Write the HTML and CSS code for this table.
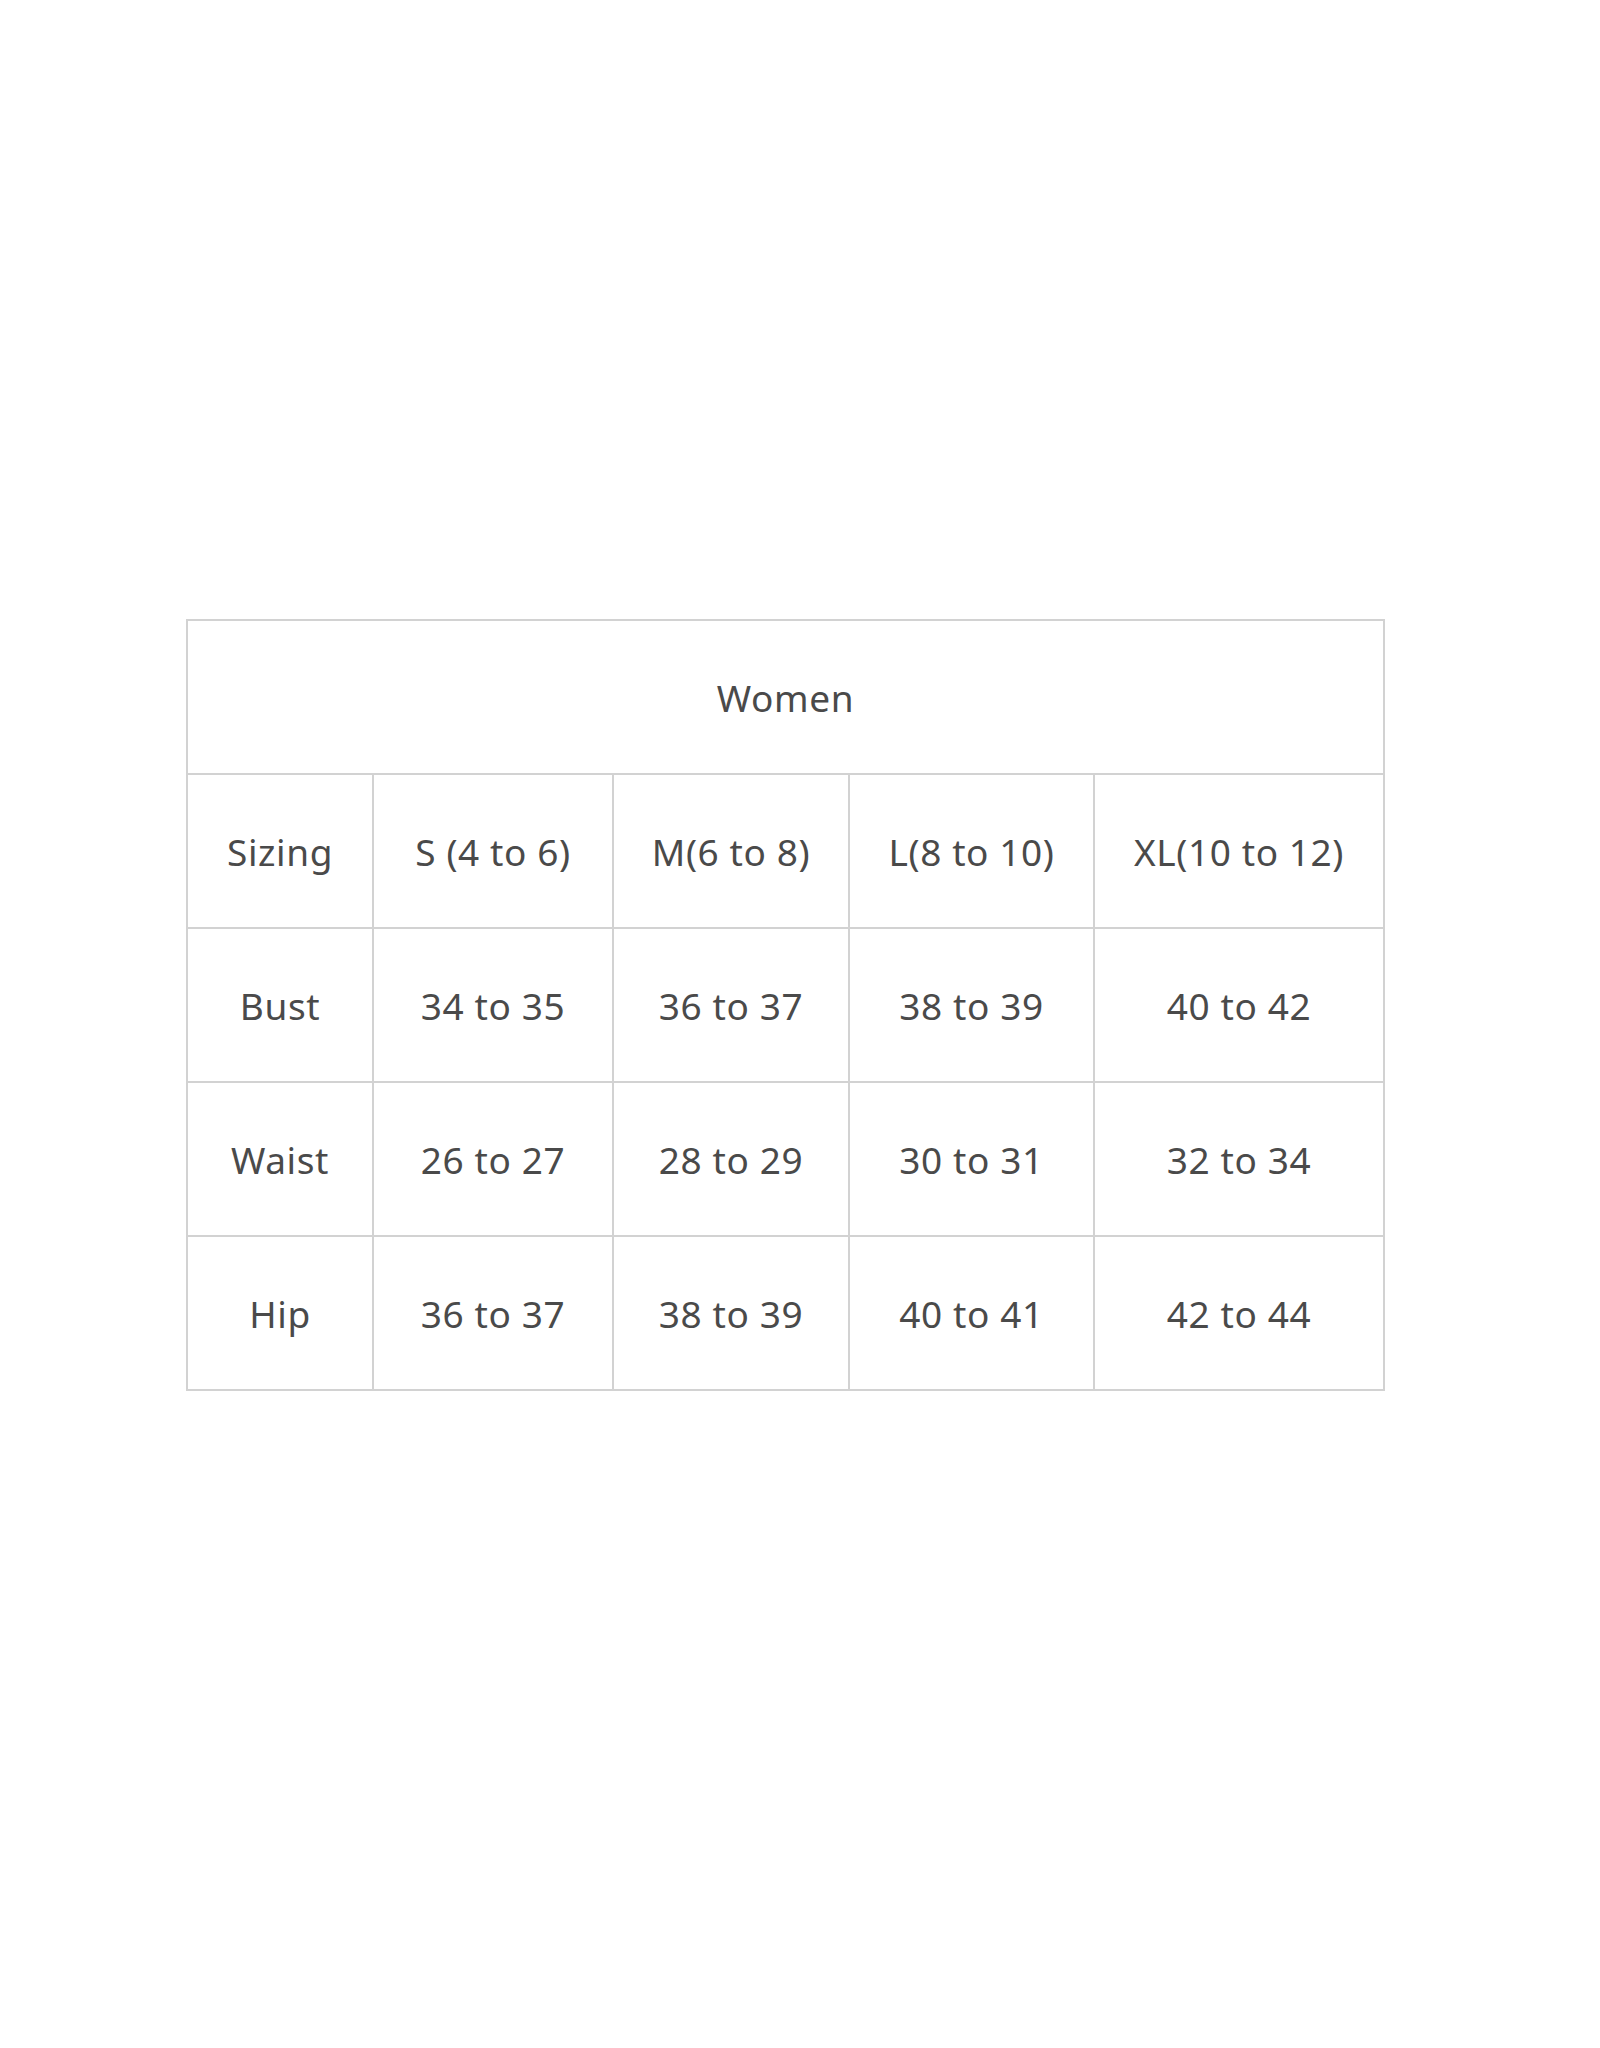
FILE: index.html
```html
<!DOCTYPE html>
<html>
<head>
<meta charset="utf-8">
<link rel="stylesheet" href="styles.css">
</head>
<body>
<table class="size-chart">
  <colgroup>
    <col class="c1"><col class="c2"><col class="c3"><col class="c4"><col class="c5">
  </colgroup>
  <tr><td colspan="5">Women</td></tr>
  <tr><td>Sizing</td><td>S (4 to 6)</td><td>M(6 to 8)</td><td>L(8 to 10)</td><td>XL(10 to 12)</td></tr>
  <tr><td>Bust</td><td>34 to 35</td><td>36 to 37</td><td>38 to 39</td><td>40 to 42</td></tr>
  <tr><td>Waist</td><td>26 to 27</td><td>28 to 29</td><td>30 to 31</td><td>32 to 34</td></tr>
  <tr><td>Hip</td><td>36 to 37</td><td>38 to 39</td><td>40 to 41</td><td>42 to 44</td></tr>
</table>
</body>
</html>
```
FILE: styles.css
```css
html, body {
  margin: 0;
  padding: 0;
  background: #ffffff;
}
.size-chart {
  margin: 619px 0 0 186px;
  border-collapse: collapse;
  table-layout: fixed;
  width: 1199px;
  font-family: "Noto Sans", "Open Sans", sans-serif;
  font-size: 37px;
  letter-spacing: 0.6px;
  color: #4a4a4a;
}
.c1 { width: 186px; }
.c2 { width: 240px; }
.c3 { width: 236px; }
.c4 { width: 245px; }
.c5 { width: 290px; }
.size-chart td {
  border: 2px solid #d2d2d2;
  height: 152px;
  padding: 0;
  text-align: center;
  vertical-align: middle;
  white-space: nowrap;
}
```
